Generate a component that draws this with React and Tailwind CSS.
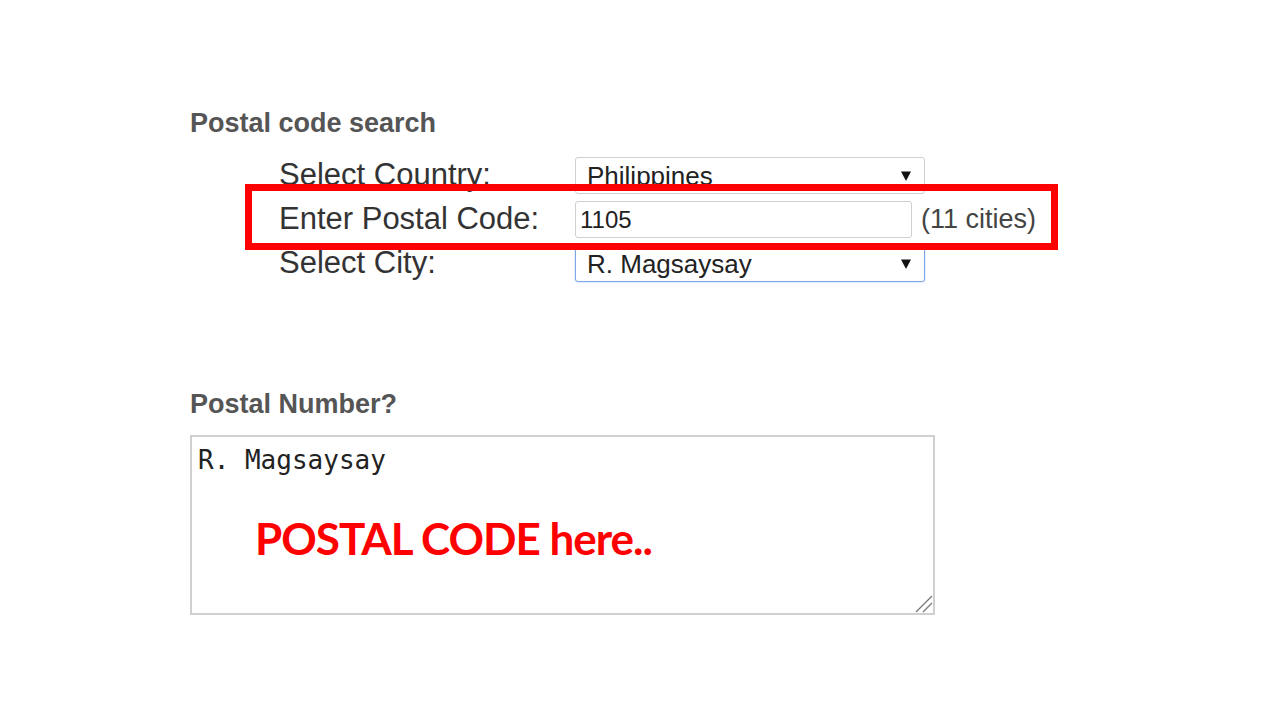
import React from 'react';

const arial = { fontFamily: '"Liberation Sans", Arial, sans-serif' };

function Arrow() {
  return (
    <svg width="10" height="10" viewBox="0 0 10 10" className="shrink-0">
      <path d="M0 0.5 H10 L5 10 Z" fill="#111" />
    </svg>
  );
}

function FakeSelect({ value, focused }) {
  return (
    <div
      className={
        'flex h-[37px] w-[350px] items-center justify-between rounded-[3px] border bg-white pl-[11px] pr-[13px] text-[26px] text-[#222] ' +
        (focused ? 'border-[#7ea6e6] shadow-[0_0_2px_#a9c5f0]' : 'border-[#cfcfcf]')
      }
    >
      <span className="leading-none">{value}</span>
      <Arrow />
    </div>
  );
}

export default function App() {
  return (
    <div className="relative min-h-[720px] w-[1280px] overflow-hidden bg-white" style={arial}>
      <div className="pl-[190px] pt-[110px]">
        {/* Search block */}
        <h2 className="text-[27px] font-bold leading-none text-[#555]">Postal code search</h2>

        <div className="ml-[89px] mt-[20px] flex flex-col gap-[7px] text-[#333]">
          <div className="flex items-start">
            <label className="mt-[2px] w-[296px] text-[31px] leading-[31px]">Select Country:</label>
            <FakeSelect value="Philippines" />
          </div>
          <div className="flex items-start">
            <label className="mt-[2px] w-[296px] text-[31px] leading-[31px]">Enter Postal Code:</label>
            <div className="flex h-[37px] w-[337px] items-center rounded-[3px] border border-[#cfcfcf] bg-white pl-[4px] text-[24px] leading-none text-[#222]">
              1105
            </div>
            <span className="ml-[9px] mt-[5px] text-[27px] leading-[27px] text-[#444]">(11 cities)</span>
          </div>
          <div className="flex items-start">
            <label className="mt-[2px] w-[296px] text-[31px] leading-[31px]">Select City:</label>
            <FakeSelect value="R. Magsaysay" focused />
          </div>
        </div>

        {/* Result block */}
        <h2 className="mt-[109px] text-[27px] font-bold leading-none text-[#555]">Postal Number?</h2>
        <div className="relative mt-[17px] w-[745px]">
          <textarea
            readOnly
            value="R. Magsaysay"
            className="block h-[180px] w-full resize-none border-2 border-[#d0d0d0] bg-white pl-[6px] pt-[8px] text-[26px] leading-[30px] text-[#222] outline-none"
            style={{ fontFamily: '"DejaVu Sans Mono", monospace' }}
          />
          {/* resize grip */}
          <svg width="18" height="18" viewBox="0 0 18 18" className="absolute bottom-[2px] right-[2px]">
            <path d="M1 17 L17 1 M8 17 L17 8" stroke="#777" strokeWidth="1.3" />
          </svg>
        </div>
      </div>

      {/* annotation overlays */}
      <div className="absolute left-[245px] top-[184px] h-[66px] w-[813px] border-[7px] border-[#ff0000]" />
      <div
        className="absolute left-[255px] top-[516px] text-[44px] font-bold leading-none tracking-[-1px] text-[#ff0000]"
        style={{ fontFamily: 'Lato, sans-serif' }}
      >
        POSTAL CODE here..
      </div>
    </div>
  );
}
